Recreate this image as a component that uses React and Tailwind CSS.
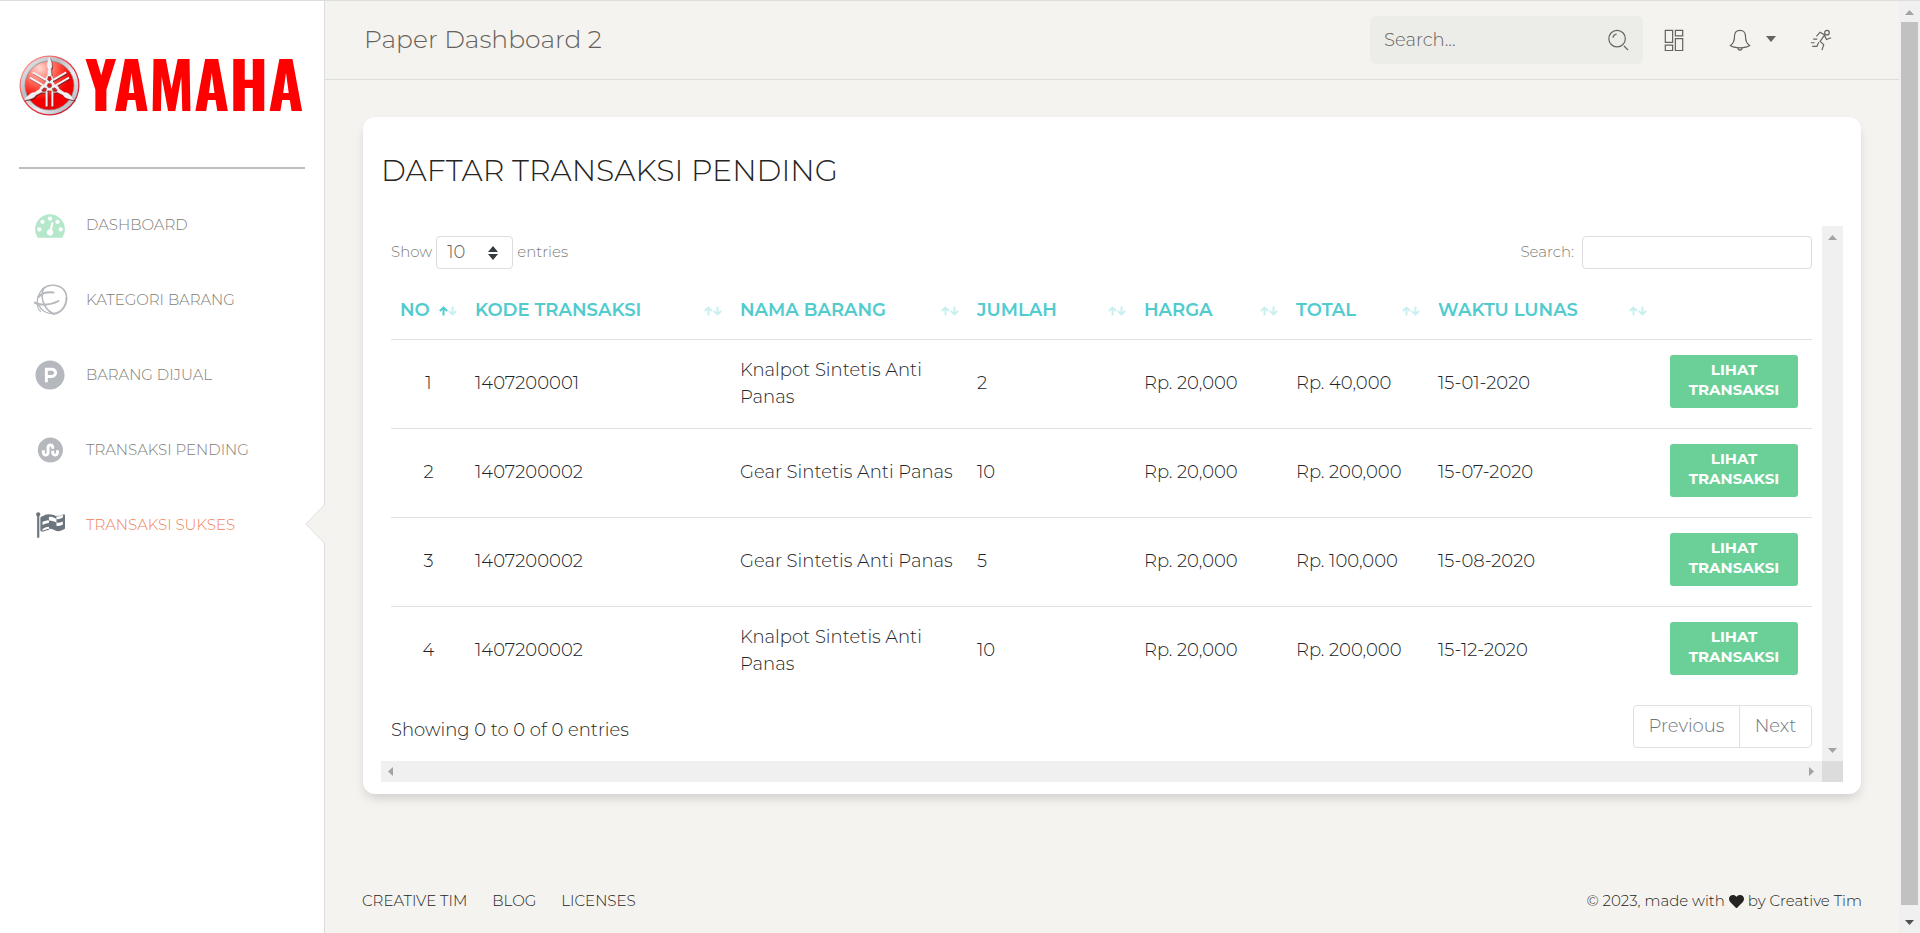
import { FaProductHunt, FaStumbleuponCircle, FaHeart } from "react-icons/fa";

const tach =
  "M384 1152q0-53-37.5-90.5t-90.5-37.5-90.5 37.5-37.5 90.5 37.5 90.5 90.5 37.5 90.5-37.5 37.5-90.5zM576 704q0-53-37.5-90.5t-90.5-37.5-90.5 37.5-37.5 90.5 37.5 90.5 90.5 37.5 90.5-37.5 37.5-90.5zM1004 1185l101-382q6-26-7.5-48.5t-38.5-29.5-48 6.500-30 39.500l-101 382q-60 5-107 43.500t-63 98.500q-20 77 20 146t117 89 146-20 89-117q16-60-6-117t-72-91zM1664 1152q0-53-37.5-90.5t-90.5-37.5-90.5 37.5-37.5 90.5 37.5 90.5 90.5 37.5 90.5-37.5 37.5-90.5zM1024 512q0-53-37.5-90.5t-90.5-37.5-90.5 37.5-37.5 90.5 37.5 90.5 90.5 37.5 90.5-37.5 37.5-90.5zM1472 704q0-53-37.5-90.5t-90.5-37.5-90.5 37.5-37.5 90.5 37.5 90.5 90.5 37.5 90.5-37.5 37.5-90.5zM1792 1152q0 261-141 483-19 29-54 29h-1402q-35 0-54-29-141-221-141-483 0-182 71-348t191-286 286-191 348-71 348 71 286 191 191 286 71 348z";
const flag =
  "M832 783v-192q-181 16-384 117v185q205-96 384-110zM832 1201v-197q-172 8-384 126v189q215-111 384-118zM1664 867v-184q-235 116-384 71v-224q-20-6-39-15-5-3-33-17t-34.5-17-31.5-15-34.5-15.5-32.5-13-36-12.5-35-8.5-39.5-7.5-39.5-4-44-2q-23 0-49 3v222h19q102 0 192.5 29t197.5 82q19 9 39 15v188q42 17 91 17 120 0 293-92zM1664 452v-189q-169 91-306 91-45 0-78-8v196q148 42 384-90zM320 256q0 35-17.5 64t-46.5 46v1266q0 14-9 23t-23 9h-64q-14 0-23-9t-9-23v-1266q-29-17-46.5-46t-17.5-64q0-53 37.5-90.5t90.5-37.5 90.5 37.5 37.5 90.5zM1792 320v763q0 39-35 57-10 5-17 9-218 116-369 116-88 0-158-35l-28-14q-64-33-99-48t-91-29-114-14q-102 0-235.5 44t-228.5 102q-15 9-33 9-16 0-32-8-32-19-32-56v-742q0-35 31-55 35-21 78.5-42.5t114-52 152.5-49.5 155-19q112 0 209 31t209 86q38 19 89 19 122 0 310-112 22-12 31-17 31-16 62 2 31 20 31 55z";

const Glyph = ({ d }) => (
  <svg viewBox="0 0 1792 1792" className="size-[30px]" fill="currentColor" fillRule="evenodd" aria-hidden="true">
    <path d={d} />
  </svg>
);

const Yarn = () => (
  <svg viewBox="0 0 36 31" className="h-[31px] w-9" fill="none" stroke="currentColor" strokeLinecap="round" aria-hidden="true">
    <path d="M11 5C14 2 18 1 22 1.300 30 2 35 7 34.500 15" strokeWidth="1.600" />
    <path d="M34.500 14C34.500 22 29 29 22 29.800" strokeWidth="1.900" />
    <path d="M22 29.800C14 30 9 26 6.500 21" strokeWidth="1.200" />
    <path d="M12 3.500C9 10 9.500 16 13 22c2 3.500 5 6.500 9 7.800" strokeWidth="1.500" />
    <path d="M11 4.500C6 10 4.500 16 5.500 22c.5 2.500 1.500 4 3 5.500" strokeWidth="1.200" />
    <path d="M6.500 13C10 9 15 7.800 21.500 8.500" strokeWidth="2" />
    <path d="M3 19C10 21.500 18 21.500 26.500 17" strokeWidth="1.900" />
    <path d="M2 18l4 .8M7.500 21c1 3 2 4.500 3.500 6" strokeWidth=".8" />
  </svg>
);

const nav = [
  { label: "DASHBOARD", icon: <Glyph d={tach} />, tone: "text-[#b5e8cb]" },
  { label: "KATEGORI BARANG", icon: <Yarn />, tone: "text-[#b5b8bd]" },
  { label: "BARANG DIJUAL", icon: <FaProductHunt className="size-[30px]" />, tone: "text-[#b5b8bd]" },
  { label: "TRANSAKSI PENDING", icon: <FaStumbleuponCircle className="size-[26px]" />, tone: "text-[#b5b8bd]" },
  { label: "TRANSAKSI SUKSES", icon: <Glyph d={flag} />, tone: "text-[#6c757d]", active: true },
];

const columns = [
  { label: "NO", width: "w-[75px]", sorted: true },
  { label: "KODE TRANSAKSI", width: "w-[265px]" },
  { label: "NAMA BARANG", width: "w-[237px]" },
  { label: "JUMLAH", width: "w-[167px]" },
  { label: "HARGA", width: "w-[152px]" },
  { label: "TOTAL", width: "w-[142px]" },
  { label: "WAKTU LUNAS", width: "w-[227px]" },
];

const rows = [
  ["1407200001", "Knalpot Sintetis Anti Panas", "2", "Rp. 20,000", "Rp. 40,000", "15-01-2020"],
  ["1407200002", "Gear Sintetis Anti Panas", "10", "Rp. 20,000", "Rp. 200,000", "15-07-2020"],
  ["1407200002", "Gear Sintetis Anti Panas", "5", "Rp. 20,000", "Rp. 100,000", "15-08-2020"],
  ["1407200002", "Knalpot Sintetis Anti Panas", "10", "Rp. 20,000", "Rp. 200,000", "15-12-2020"],
];

function Logo() {
  return (
    <svg viewBox="0 0 286 61" className="block w-full overflow-visible" role="img" aria-label="Yamaha">
      <defs>
        <linearGradient id="rim" x1="0" y1="0" x2="1" y2="1">
          <stop offset="0" stopColor="#f4f4f5" />
          <stop offset=".35" stopColor="#b9bcc2" />
          <stop offset=".6" stopColor="#eceef0" />
          <stop offset="1" stopColor="#9ea2aa" />
        </linearGradient>
        <radialGradient id="face" cx=".3" cy=".15" r=".8">
          <stop offset="0" stopColor="#ffd9d2" />
          <stop offset=".45" stopColor="#ff5a4a" />
          <stop offset=".8" stopColor="#f40000" />
        </radialGradient>
        <linearGradient id="edge" x1="0" y1="0" x2="1" y2="1">
          <stop offset="0" stopColor="#ffb3a8" />
          <stop offset=".5" stopColor="#ef3340" />
          <stop offset="1" stopColor="#b3122a" />
        </linearGradient>
        <g id="fork">
          <path d="M0-28.500c1.500 4 2.800 7 2.300 10l-1 2 .5 6.500c1.800 1.500 2.300 3.500 1.800 5.500L0-1-3.600-4.500c-.5-2 0-4 1.800-5.500l.5-6.500-1-2C-2.800-21.500-1.500-24.500 0-28.500z" />
          <path d="M-2.900 6v15M2.900 6v15" fill="none" strokeWidth="2" />
        </g>
      </defs>
      <circle cx="30.500" cy="30.500" r="30" fill="url(#edge)" />
      <circle cx="30.500" cy="30.500" r="28.800" fill="url(#rim)" />
      <circle cx="30.500" cy="30.500" r="24.500" fill="url(#face)" stroke="#8c8f96" strokeWidth=".8" />
      <g fill="#5a2028" stroke="#5a2028" transform="translate(31.300 31.500)" opacity=".7">
        <use href="#fork" />
        <use href="#fork" transform="rotate(120)" />
        <use href="#fork" transform="rotate(240)" />
      </g>
      <g fill="#f1f2f4" stroke="#f1f2f4" strokeWidth=".5" transform="translate(30.500 30.500)">
        <use href="#fork" />
        <use href="#fork" transform="rotate(120)" />
        <use href="#fork" transform="rotate(240)" />
        <circle r="5" />
        <g fill="#e01b1b" stroke="#555">
          <circle r="2.200" />
          <path d="M-1.200-9h2.400l.8 3-2 2-2-2zM7.800 4.500l-1.200 2-3-.8-.8-2.700 2.700-.8zM-7.800 4.500l1.200 2 3-.8.8-2.700-2.700-.8z" />
        </g>
      </g>
      <text
        x="66"
        y="56"
        fontSize="64"
        fontWeight="700"
        fontFamily="Oswald, 'Liberation Sans', sans-serif"
        fill="#f00"
      >
        YAMAHA
      </text>
    </svg>
  );
}

const Stroke = ({ children, className }) => (
  <svg viewBox="0 0 24 24" className={className} fill="none" stroke="currentColor" strokeWidth="1.300" aria-hidden="true">
    {children}
  </svg>
);

const Sort = ({ active }) => (
  <svg viewBox="0 0 18 10" className="h-[10px] w-[18px] shrink-0" fill="none" stroke="#51cbce" strokeWidth="2" aria-hidden="true">
    <path d="M4.500 9.500V2M.8 5 4.500 1.600 8.200 5" opacity={active ? 1 : 0.3} />
    <path d="M13.500.500v7M9.800 5l3.700 3.400L17.200 5" opacity=".3" />
  </svg>
);

const Arrow = ({ d, className = "fill-[#a3a3a3]" }) => (
  <svg viewBox="0 0 21 21" className={"block size-[21px] shrink-0 " + className} aria-hidden="true">
    <path d={d} />
  </svg>
);
const UP = "M6 14h9l-4.500-5z";
const DOWN = "M6 8h9l-4.500 5z";
const LEFT = "M12 6v9l-5-4.500z";
const RIGHT = "M8 6v9l5-4.500z";

function Sidebar() {
  return (
    <aside className="w-[325px] shrink-0 border-r border-[#ddd] bg-white">
      <div className="mx-[19px] border-b-2 border-[#bfbfba] pt-[54px] pb-[51px]">
        <Logo />
      </div>
      <nav className="mt-[18px]">
        {nav.map((n) => (
          <a key={n.label} href="#" className="relative flex h-[75px] items-center pl-[31px]">
            <span className={"flex w-[38px] justify-center " + n.tone}>{n.icon}</span>
            <span className={"ml-[17px] pt-[2px] text-[15px] font-light " + (n.active ? "text-[#ef8157]" : "text-[#807d76]")}>
              {n.label}
            </span>
            {n.active && (
              <svg viewBox="0 0 20 38" className="absolute top-[18px] -right-px h-[38px] w-5" aria-hidden="true">
                <path d="M20 0 1 19l19 19z" fill="#f4f3ef" />
                <path d="M19.500 0 .8 19l18.700 19" fill="none" stroke="#ddd" />
              </svg>
            )}
          </a>
        ))}
      </nav>
    </aside>
  );
}

function Header() {
  return (
    <header className="flex h-[79px] items-center border-b border-[#ddd] pr-[67px] pl-[39px] text-[#66615b]">
      <h1 className="text-[25px] font-light">Paper Dashboard 2</h1>
      <div className="ml-auto flex h-12 w-[273px] items-center rounded-md bg-[#ecede8] px-[14px]">
        <input aria-label="Search" placeholder="Search..." className="min-w-0 flex-1 bg-transparent text-[18px] font-light outline-none placeholder:text-[#66615b]" />
        <Stroke className="size-[22px]">
          <circle cx="11" cy="10.500" r="9" />
          <path d="M6.500 9.500a4.500 4.500 0 0 1 4-4M18.500 18.500l4.500 4.500" />
        </Stroke>
      </div>
      <a href="#" aria-label="Stats" className="ml-5">
        <Stroke className="size-[22px]">
          <path d="M2.500 1.500h8v13h-8zM2.500 17.500h8v6h-8zM13.500 1.500h8v6h-8zM13.500 10.500h8v13h-8z" />
        </Stroke>
      </a>
      <button type="button" aria-label="Notifications" className="ml-11 flex items-center">
        <Stroke className="size-[22px]">
          <path d="M12 1.500c-4 0-6 2.800-6 6.500 0 5-1 8-4.500 10 2.500 2 6.500 2.500 10.500 2.500s8-.5 10.500-2.500C19 16 18 13 18 8c0-3.700-2-6.500-6-6.500zM9.500 20.500c.3 1.800 1.200 2.500 2.500 2.500s2.200-.7 2.500-2.500" />
        </Stroke>
        <svg viewBox="0 0 10 6" className="mb-[3px] ml-[15px] h-[6px] w-[10px]" fill="currentColor" aria-hidden="true">
          <path d="M0 0h10L5 6z" />
        </svg>
      </button>
      <a href="#" aria-label="Account" className="ml-[34px]">
        <Stroke className="size-[22px]">
          <circle cx="18.500" cy="4" r="2.500" />
          <path d="M7 8l4-4.500 5 3-5 7 4 3.500-2 6M9.500 14.500 7.500 19H2.500M16 7.500l2 4 5-2M3.500 11H8M1 15h4" />
        </Stroke>
      </a>
    </header>
  );
}

function Transactions() {
  return (
    <table className="mt-2 w-full table-fixed border-collapse text-left text-[18px] text-[#212529]">
      <thead>
        <tr className="h-[62px] border-b border-[#dee2e6] text-[#51cbce]">
          {columns.map((c) => (
            <th key={c.label} scope="col" className={"px-[9px] pt-[6px] font-semibold whitespace-nowrap " + c.width}>
              <span className="flex items-center justify-between">
                {c.label}
                <Sort active={c.sorted} />
              </span>
            </th>
          ))}
          <td className="w-[156px]" />
        </tr>
      </thead>
      <tbody>
        {rows.map((r, i) => (
          <tr key={i} className="h-[89px] border-b border-[#dee2e6] font-light last:border-b-0">
            <td className="px-[9px] text-center">{i + 1}</td>
            {r.map((v, j) => (
              <td key={j} className="px-[9px] leading-[27px]">{v}</td>
            ))}
            <td className="pt-[15px] text-center align-top">
              <button type="button" className="mx-auto block h-[53px] w-32 rounded-[3px] bg-[#6bd098] pb-[2px] text-[15px] leading-5 font-bold text-white">
                LIHAT
                <br />
                TRANSAKSI
              </button>
            </td>
          </tr>
        ))}
      </tbody>
    </table>
  );
}

export default function App() {
  return (
    <div className="flex min-h-screen border-t border-[#ddd] bg-[#f4f3ef] font-['Montserrat','Inter',sans-serif]">
      <Sidebar />
      <div className="flex min-w-0 flex-1 flex-col">
        <Header />
        <main className="mx-[38px] mt-[37px] rounded-xl bg-white px-[18px] pb-3 shadow-[0_6px_12px_-3px_rgba(0,0,0,0.18)]">
          <h2 className="pt-8 pb-[33px] text-[30px] leading-[44px] font-light text-[#252422]">DAFTAR TRANSAKSI PENDING</h2>
          <div className="flex">
            <div className="min-w-0 flex-1 px-[10px] pt-[10px] pb-[13px]">
              <div className="flex items-center justify-between text-[15px] font-light text-[#807d76]">
                <div className="flex items-center gap-1">
                  <label htmlFor="len">Show</label>
                  <span className="relative">
                    <select id="len" className="h-[33px] w-[77px] appearance-none rounded border border-[#ddd] bg-white pl-[10px] text-[18px] text-[#66615b]">
                      <option>10</option>
                    </select>
                    <svg viewBox="0 0 10 14" className="pointer-events-none absolute top-[10px] right-[15px] h-[14px] w-[10px] fill-[#343a40]" aria-hidden="true">
                      <path d="M0 6h10L5 0zM0 8h10l-5 6z" />
                    </svg>
                  </span>
                  <span>entries</span>
                </div>
                <label className="flex items-center gap-2">
                  Search:
                  <input type="search" className="h-[33px] w-[230px] rounded border border-[#ddd] bg-white px-2" />
                </label>
              </div>
              <Transactions />
              <div className="mt-[10px] flex items-end justify-between font-light">
                <p className="pb-1 text-[18px] text-[#252422]">Showing 0 to 0 of 0 entries</p>
                <div className="flex h-[43px] divide-x divide-[#dee2e6] rounded border border-[#dee2e6] text-[18px] text-[#6c757d]">
                  <button type="button" className="w-[106px]">Previous</button>
                  <button type="button" className="w-[71px]">Next</button>
                </div>
              </div>
            </div>
            <div className="flex w-[21px] shrink-0 flex-col justify-between bg-[#f0f0f0]">
              <Arrow d={UP} />
              <Arrow d={DOWN} />
            </div>
          </div>
          <div className="flex bg-[#f0f0f0]">
            <Arrow d={LEFT} />
            <span className="flex-1" />
            <Arrow d={RIGHT} />
            <span className="size-[21px] bg-[#dcdcdc]" />
          </div>
        </main>
        <footer className="mt-auto flex justify-between px-[37px] pb-5 text-[15px] leading-6 font-light text-[#252422]">
          <nav className="flex gap-[25px]">
            <a href="#">CREATIVE TIM</a>
            <a href="#">BLOG</a>
            <a href="#">LICENSES</a>
          </nav>
          <p className="flex items-center gap-1">
            © 2023, made with <FaHeart className="size-[15px]" /> by Creative Tim
          </p>
        </footer>
      </div>
      <div className="flex w-[21px] shrink-0 flex-col bg-[#f0f0f0]" aria-hidden="true">
        <Arrow d={UP} />
        <div className="mx-[2px] flex-1 bg-[#c1c1c1]" />
        <div className="pt-[7px]">
          <Arrow d={DOWN} className="fill-[#505050]" />
        </div>
      </div>
    </div>
  );
}
